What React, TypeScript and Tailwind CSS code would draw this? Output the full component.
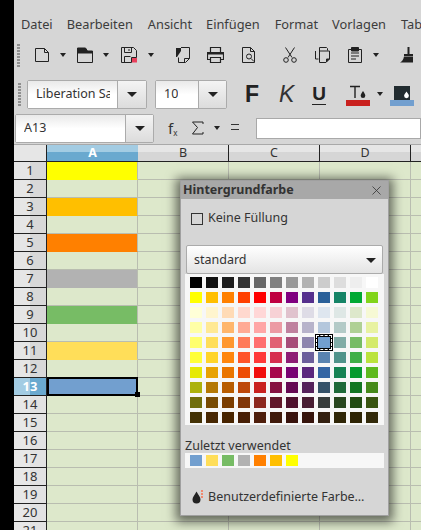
import type { ReactNode } from 'react';

const font = "font-['Noto_Sans',sans-serif]";

const palette = [
  ['#000000', '#111111', '#1c1c1c', '#333333', '#666666', '#808080', '#999999', '#b2b2b2', '#cccccc', '#dddddd', '#eeeeee', '#ffffff'],
  ['#ffff00', '#ffbf00', '#ff8000', '#ff4000', '#ff0000', '#bf0041', '#800080', '#55308d', '#2a6099', '#158466', '#00a933', '#81d41a'],
  ['#ffffd7', '#fff5ce', '#ffdbb6', '#ffd8ce', '#ffd7d7', '#f7d1d5', '#e0c2cd', '#dedce6', '#dee6ef', '#dee7e5', '#dde8cb', '#f6f9d4'],
  ['#ffffa6', '#ffe994', '#ffb66c', '#ffaa95', '#ffa6a6', '#ec9ba4', '#bf819e', '#b7b3ca', '#b4c7dc', '#b3cac7', '#afd095', '#e8f2a1'],
  ['#ffff6d', '#ffde59', '#ff972f', '#ff7b59', '#ff6d6d', '#e16173', '#a64d79', '#8e86ae', '#729fcf', '#81aca6', '#77bc65', '#d4ea6b'],
  ['#ffff38', '#ffd428', '#ff860d', '#ff5429', '#ff3838', '#d62e4e', '#8d1d75', '#6b5e9b', '#5983b0', '#50938a', '#3faf46', '#bbe33d'],
  ['#e6e905', '#e8a202', '#ea7500', '#ed4c05', '#f10d0c', '#a7074b', '#780373', '#5b277d', '#3465a4', '#168253', '#069a2e', '#5eb91e'],
  ['#acb20c', '#b47804', '#b85c00', '#be480a', '#c9211e', '#861141', '#650953', '#55215b', '#355269', '#1e6a39', '#127622', '#468a1a'],
  ['#706e0c', '#784b04', '#7b3d00', '#813709', '#8d281e', '#611729', '#4e102d', '#481d32', '#383d3c', '#28471f', '#224b12', '#395511'],
  ['#443205', '#472702', '#482400', '#471f06', '#4f1f0c', '#401a0b', '#38130d', '#36140c', '#332010', '#2f2607', '#2e2404', '#332a0a'],
];

const recent = ['#729fcf', '#ffde59', '#77bc65', '#b2b2b2', '#ff8000', '#ffbf00', '#ffff00'];

const fills: Record<number, string> = {
  1: 'bg-[#ffff00]',
  3: 'bg-[#ffbf00]',
  5: 'bg-[#ff8000]',
  7: 'bg-[#b2b2b2]',
  9: 'bg-[#77bc65]',
  11: 'bg-[#ffde59]',
  13: 'bg-[#729fcf]',
};

const rows = Array.from({ length: 21 }, (_, i) => i + 1);

function Icon({ w = 16, h = 16, className = '', children }: { w?: number; h?: number; className?: string; children: ReactNode }) {
  return (
    <svg width={w} height={h} viewBox={`0 0 ${w} ${h}`} fill="none" stroke="#222" strokeWidth="1" className={`shrink-0 ${className}`}>
      {children}
    </svg>
  );
}

function Arrow({ className = '' }: { className?: string }) {
  return <div className={`w-0 h-0 shrink-0 border-x-[3px] border-x-transparent border-t-[4px] border-t-[#222] ${className}`} />;
}

function Grip({ className = '' }: { className?: string }) {
  return <div className={`w-[3px] shrink-0 bg-[repeating-linear-gradient(to_bottom,#8f8f8f_0,#8f8f8f_2px,transparent_2px,transparent_3px)] ${className}`} />;
}

function Combo({ text, inputW, btnW, height, className = '', pad = 'pl-[8px] pr-[7px]' }: { text: string; inputW: string; btnW: string; height: string; className?: string; pad?: string }) {
  return (
    <div className={`flex shrink-0 rounded-[2px] border border-[#ababab] ${height} ${className}`}>
      <div className={`${inputW} ${pad} flex items-center overflow-hidden whitespace-nowrap bg-linear-to-b from-[#e9e9e9] via-white to-white text-[12.5px] text-[#333]`}>
        <span className="block overflow-hidden">{text}</span>
      </div>
      <div className={`${btnW} flex items-center justify-center border-l border-[#ababab] bg-linear-to-b from-[#f4f4f4] to-[#dcdcdc]`}>
        <div className="w-0 h-0 border-x-[5px] border-x-transparent border-t-[5px] border-t-[#222]" />
      </div>
    </div>
  );
}

function Toolbars() {
  return (
    <>
      <div className="h-[37px] pt-[16px] flex text-[12.8px] text-[#3c3c3c] leading-[17px] whitespace-nowrap">
        <span className="ml-[7px]">Datei</span>
        <span className="ml-[14px]">Bearbeiten</span>
        <span className="ml-[15px]">Ansicht</span>
        <span className="ml-[14px]">Einfügen</span>
        <span className="ml-[15px]">Format</span>
        <span className="ml-[14px]">Vorlagen</span>
        <span className="ml-[15px]">Tabelle</span>
      </div>

      <div className="h-[36px] flex items-center overflow-hidden">
        <Grip className="ml-[3px] h-[23px]" />
        <Icon className="ml-[14px]">
          <path d="M1.500 1.500h9l4 4v9h-13zM10.500 1.500v4h4" />
        </Icon>
        <Arrow className="ml-[10px]" />
        <Icon w={17} className="ml-[11px]">
          <path d="M.5 5.500h15v10H.5z" />
          <path d="M.5 1h8l2 3h5v2H.5z" fill="#222" />
        </Icon>
        <Arrow className="ml-[9px]" />
        <Icon w={17} className="ml-[12px]">
          <path d="M.5.5h12l3 3v7h-5v5H.5zM3.500.5v5h7v-5M8 2v2M3.500 15.500v-6h6" />
          <rect x="11" y="11" width="5" height="4.500" fill="#e8405c" stroke="none" />
        </Icon>
        <Arrow className="ml-[10px]" />
        <Icon className="ml-[21px]">
          <path d="M6 .5h8.500v11l-4 4h-7v-5" />
          <path d="M9.500 15.500v-4h5" />
          <path d="M1 1h5v3L2 10H1z" fill="#222" stroke="none" />
        </Icon>
        <Icon w={17} className="ml-[16px]">
          <path d="M3.500 5V.5h10V5M3.500 12.500H.5V5.500h16v7h-3M3.500 10.500h10v5h-10z" strokeWidth="1.200" />
          <path d="M1 5h15v2.500H1z" fill="#222" stroke="none" />
        </Icon>
        <Icon className="ml-[17px]">
          <path d="M1.500.5h8l4 4v11h-12zM9.500.5v4h4" />
          <circle cx="8" cy="9.500" r="2.500" />
          <path d="M10 11.500l3 3" />
        </Icon>
        <Icon className="ml-[25px]">
          <path d="M3.500.5l6.500 10M12.500.5L6 10.500" />
          <circle cx="4" cy="13" r="2.300" />
          <circle cx="12" cy="13" r="2.300" />
        </Icon>
        <Icon className="ml-[17px]">
          <path d="M4.500 4V.5h7l1 1v2M.5 4v8h3M4.500 4h10v8l-3.500 3.500h-6.500z" />
          <path d="M11.500 15v-3h3" fill="#222" />
        </Icon>
        <Icon className="ml-[16px]">
          <path d="M1.500 2.500h13v13h-13zM4 6h8M4 9h8M4 12h5" />
          <path d="M4.500.5h7V4h-7z" fill="#222" />
        </Icon>
        <Arrow className="ml-[10px]" />
        <Icon w={14} className="ml-[21px]">
          <path d="M7.500 0h2v7h-2z" fill="#222" stroke="none" />
          <path d="M4 7h9v2H4z" fill="#222" stroke="none" />
          <path d="M4 9.500h9v6H0c1.500-1 3.500-2.500 4-6z" fill="#222" stroke="none" />
        </Icon>
      </div>

      <div className="h-[40px] pt-[2px] flex items-center">
        <Grip className="ml-[4px] h-[23px]" />
        <Combo text="Liberation Sans" inputW="w-[89px]" btnW="w-[29px]" height="h-[29px]" className="ml-[6px]" />
        <Combo text="10" inputW="w-[42px]" btnW="w-[28px]" height="h-[29px]" className="ml-[8px]" />
        <span className="ml-[18px] w-[15px] text-[23px] leading-none font-bold text-[#222] font-['Liberation_Sans',sans-serif]">F</span>
        <span className="ml-[19px] w-[15px] text-[23px] leading-none italic text-[#333] font-['Liberation_Sans',sans-serif]">K</span>
        <span className="ml-[18px] w-[14px] text-[19px] leading-[21px] font-bold border-b border-[#222] text-center text-[#222] font-['Liberation_Sans',sans-serif]">U</span>
        <Icon w={24} h={24} className="ml-[20px]">
          <path d="M4 4.500h10M9 4.500V16" strokeWidth="1.400" />
          <path d="M17 9c-1.500 2.200-2.300 3.400-2.300 4.700a2.300 2.300 0 0 0 4.600 0c0-1.300-.8-2.500-2.300-4.700z" fill="#222" stroke="none" />
          <rect x="0" y="18" width="24" height="6" fill="#c9211e" stroke="none" />
        </Icon>
        <Arrow className="ml-[7px]" />
        <Icon w={24} h={24} className="ml-[7px]">
          <rect x="4" y="4" width="16" height="14" fill="#222c30" stroke="none" />
          <path d="M16.500 9.500c-1.500 2.200-2.400 3.200-2.400 4.300a2.400 2.400 0 0 0 4.800 0c0-1.100-.9-2.100-2.400-4.300z" fill="#fff" stroke="none" />
          <rect x="0" y="18" width="24" height="6" fill="#729fcf" stroke="none" />
        </Icon>
      </div>

      <div className="h-[32px] flex items-start border-b border-[#a9a9a9]">
        <Combo text="A13" inputW="w-[109px]" btnW="w-[28px]" height="h-[29px]" className="ml-px mt-px" />
        <span className="ml-[14px] mt-[5px] w-[12px] text-[15px] leading-[20px] text-[#333]">f<sub className="text-[8px]">x</sub></span>
        <Icon w={13} h={14} className="ml-[11px] mt-[8px]">
          <path d="M12 3V1H1.500l5 5.500-5 6.500H12v-2" />
        </Icon>
        <Arrow className="ml-[10px] mt-[13px]" />
        <div className="ml-[11px] mt-[11px] w-[8px] h-[6px] border-y border-[#333]" />
        <div className="ml-[17px] mt-[5px] grow h-[21px] bg-white border border-[#a9a9a9]" />
      </div>
    </>
  );
}

function Sheet() {
  const cols = ['B', 'C', 'D', ''];
  return (
    <div className="text-[12.5px] text-[#333]">
      <div className="flex h-[17px] border-b border-[#222]">
        <div className="w-[33px] shrink-0 border-r border-[#222] bg-[#e6e6e6]" />
        <div className="w-[91px] shrink-0 relative flex items-center justify-center font-bold text-white bg-linear-to-b from-[#a3cce3] from-45% to-[#6aa9cf] to-45%">A</div>
        {cols.map((c) => (
          <div key={c} className="w-[91px] shrink-0 border-r border-[#222] flex items-center justify-center bg-linear-to-b from-[#e6e6e6] from-45% to-[#d6d6d6] to-45%">{c}</div>
        ))}
      </div>
      {rows.map((r) => (
        <div key={r} className="flex h-[18px]">
          <div
            className={`w-[33px] shrink-0 border-r border-b border-[#222] flex items-center justify-center text-[13px] bg-linear-to-r from-50% to-50% ${
              r === 13 ? 'from-[#a3cce3] to-[#6aa9cf] font-bold text-white' : r < 13 ? 'from-[#e6e6e6] to-[#d8d8d8]' : 'from-[#e8e8e8] to-[#e2e2e2]'
            }`}
          >
            {r}
          </div>
          <div
            className={`w-[91px] shrink-0 relative ${r === 13 ? 'z-10' : 'border-r border-b border-[#b9bdb0]'} ${fills[r] ?? 'bg-[#dde8cb]'} ${
              fills[r] && r !== 13 ? 'border-b-transparent' : ''
            }`}
          >
            {r === 13 && (
              <div className="absolute -top-px inset-x-0 bottom-0 border-2 border-black">
                <div className="absolute -right-[4px] -bottom-[3px] w-[5px] h-[5px] bg-black" />
              </div>
            )}
          </div>
          {cols.map((c) => (
            <div key={c} className="w-[91px] shrink-0 border-r border-b border-[#b9bdb0] bg-[#dde8cb]" />
          ))}
        </div>
      ))}
    </div>
  );
}

function Swatch({ color, selected }: { color: string; selected?: boolean }) {
  return (
    <div className={`relative w-[12px] h-[11px] ${selected ? 'outline-[3px] outline-black z-10' : ''}`} style={{ backgroundColor: color }}>
      {selected && <div className="absolute -inset-[2px] border border-dashed border-white" />}
    </div>
  );
}

function ColorPopup() {
  return (
    <div className="absolute left-[180px] top-[180px] w-[209px] h-[336px] z-20 border border-[#a0a0a0] bg-[#d6d6d6] shadow-[0_2px_10px_4px_rgba(0,0,0,0.55)] text-[#333]">
      <div className="h-[18px] bg-[#a8a8a8] flex items-center justify-between pl-[2px] pr-[7px] pt-[1px] text-[12.5px] font-bold">
        <span>Hintergrundfarbe</span>
        <svg width="9" height="9" viewBox="0 0 9 9" stroke="#333" strokeWidth="0.8">
          <path d="M.5.5l8 8M8.500.5l-8 8" />
        </svg>
      </div>

      <div className="mt-[11px] ml-[10px] h-[17px] flex items-center gap-[5px] text-[12.5px]">
        <div className="w-[12px] h-[12px] border border-[#333]" />
        <span>Keine Füllung</span>
      </div>

      <div className="mt-[18px] mx-[5px] h-[29px] pt-[2px] rounded-[2px] border border-[#ababab] bg-linear-to-b from-white to-[#e4e4e4] flex items-center justify-between pl-[7px] pr-[6px] text-[12.5px]">
        <span>standard</span>
        <div className="w-0 h-0 border-x-[5px] border-x-transparent border-t-[5px] border-t-[#222]" />
      </div>

      <div className="mx-[4px] w-[199px] h-[151px] bg-[#f7f7f7] pt-[3px] pl-[5px] flex flex-col gap-[4px]">
        {palette.map((row, y) => (
          <div key={y} className="flex gap-[4px]">
            {row.map((c, x) => (
              <Swatch key={x} color={c} selected={y === 4 && x === 8} />
            ))}
          </div>
        ))}
      </div>

      <div className="mt-[14px] ml-[4px] text-[12.5px] leading-[14px]">Zuletzt verwendet</div>
      <div className="mx-[4px] w-[199px] h-[15px] bg-[#f7f7f7] pt-[2px] pl-[5px] flex gap-[4px]">
        {recent.map((c) => (
          <Swatch key={c} color={c} />
        ))}
      </div>

      <div className="mt-[20px] ml-[11px] flex items-center gap-[5px] text-[12.5px] leading-[17px]">
        <svg width="11" height="14" viewBox="0 0 11 14" className="shrink-0">
          <path d="M4.500 1.500C2.500 5 .5 7 .5 9.500a4 4 0 0 0 8 0c0-2.500-2-4.500-4-8z" fill="#222" />
          <path d="M9 0h2v2H9zM9 3h2v2H9zM9 6h2v2H9z" fill="#f08a70" />
        </svg>
        <span>Benutzerdefinierte Farbe…</span>
      </div>
    </div>
  );
}

export default function App() {
  return (
    <div className={`relative w-[421px] h-[530px] overflow-hidden flex bg-[#d6d6d6] ${font}`}>
      <div className="w-[14px] shrink-0 bg-black" />
      <div className="w-[407px] shrink-0">
        <Toolbars />
        <Sheet />
      </div>
      <ColorPopup />
    </div>
  );
}
